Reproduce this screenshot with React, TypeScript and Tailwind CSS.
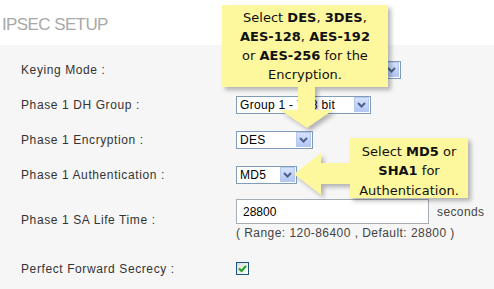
import React from "react";

const labelCls =
  "w-[236px] shrink-0 pl-[21px] text-[12px] tracking-[0.6px] text-[#333]";

function Chevron() {
  return (
    <div className="flex h-[15px] w-[15px] items-center justify-center border border-[#b7c8f0] bg-[linear-gradient(#d6e2fd,#b3c7f6)]">
      <svg width="9" height="6" viewBox="0 0 9 6">
        <path d="M1 1 L4.5 4.5 L8 1" fill="none" stroke="#4d6185" strokeWidth="2" />
      </svg>
    </div>
  );
}

function Select({ w, text }: { w: string; text: string }) {
  return (
    <div
      className={`flex h-[18px] ${w} items-center justify-between border border-[#7f9db9] bg-white pl-[3px] pr-[1px] text-[12px] text-black tracking-[0.3px]`}
    >
      <span className="overflow-hidden whitespace-nowrap">{text}</span>
      <Chevron />
    </div>
  );
}

const calloutFont = { fontFamily: '"DejaVu Sans", "Verdana", sans-serif' };

export default function App() {
  return (
    <div
      className="relative h-[289px] w-[494px] overflow-hidden bg-white"
      style={{ fontFamily: '"Liberation Sans", Arial, sans-serif' }}
    >
      <div className="flex h-[45px] items-center pl-[2px] pt-[4px]">
        <span className="text-[17px] tracking-[-0.6px] text-[#a8a8a8]">IPSEC SETUP</span>
      </div>
      <div className="h-[244px] bg-[#f6f6f6] pt-[7px]">
        <div className="flex h-[35px] items-center">
          <div className={labelCls}>Keying Mode :</div>
          <Select w="w-[165px]" text="" />
        </div>
        <div className="flex h-[35px] items-center">
          <div className={labelCls}>Phase 1 DH Group :</div>
          <Select w="w-[135px]" text="Group 1 - 768 bit" />
        </div>
        <div className="flex h-[35px] items-center">
          <div className={labelCls}>Phase 1 Encryption :</div>
          <Select w="w-[77px]" text="DES" />
        </div>
        <div className="flex h-[35px] items-center">
          <div className={labelCls}>Phase 1 Authentication :</div>
          <Select w="w-[61px]" text="MD5" />
        </div>
        <div className="mt-[7px] flex items-center">
          <div className={labelCls}>Phase 1 SA Life Time :</div>
          <div className="flex flex-col">
            <div className="flex items-center">
              <div className="flex h-[25px] w-[193px] items-center border border-[#a5acb2] bg-white pl-[6px] text-[12px] text-black">
                28800
              </div>
              <span className="ml-[8px] text-[12px] tracking-[0.4px] text-[#444]">seconds</span>
            </div>
            <div className="mt-[1px] h-[16px] text-[12px] leading-[16px] tracking-[0.45px] text-[#444]">
              ( Range: 120-86400 , Default: 28800 )
            </div>
          </div>
        </div>
        <div className="flex h-[55px] items-center">
          <div className={labelCls}>Perfect Forward Secrecy :</div>
          <div className="flex h-[13px] w-[13px] items-center justify-center border border-[#1c5180] bg-[linear-gradient(135deg,#dcdcd7,#ffffff)]">
            <svg width="9" height="9" viewBox="0 0 9 9">
              <path d="M1 4.5 L3.5 7 L8 2" fill="none" stroke="#21a121" strokeWidth="2" />
            </svg>
          </div>
        </div>
      </div>

      <svg
        className="absolute left-0 top-0 drop-shadow-[3px_3px_2px_rgba(0,0,0,0.28)]"
        width="494"
        height="289"
      >
        <path
          d="M222 5 L388 5 L388 87 L315 87 L315 110 L333 110 L307 128 L280 110 L298 110 L298 87 L222 87 Z"
          fill="#fdf89e"
        />
        <path
          d="M350 138 L468 138 L468 198 L350 198 L350 184 L321 184 L321 195 L294 174 L321 153 L321 163 L350 163 Z"
          fill="#fdf89e"
        />
      </svg>
      <div
        className="absolute left-[222px] top-[5px] flex h-[82px] w-[166px] flex-col items-center justify-center whitespace-nowrap text-center text-[13px] leading-[19px] text-[#111]"
        style={calloutFont}
      >
        <div>
          Select <b>DES</b>, <b>3DES</b>,
        </div>
        <div>
          <b>AES-128</b>, <b>AES-192</b>
        </div>
        <div>
          or <b>AES-256</b> for the
        </div>
        <div>Encryption.</div>
      </div>
      <div
        className="absolute left-[350px] top-[142px] flex h-[58px] w-[118px] flex-col items-center justify-center whitespace-nowrap text-center text-[13px] leading-[19.5px] text-[#111]"
        style={calloutFont}
      >
        <div>
          Select <b>MD5</b> or
        </div>
        <div>
          <b>SHA1</b> for
        </div>
        <div>Authentication.</div>
      </div>
    </div>
  );
}
